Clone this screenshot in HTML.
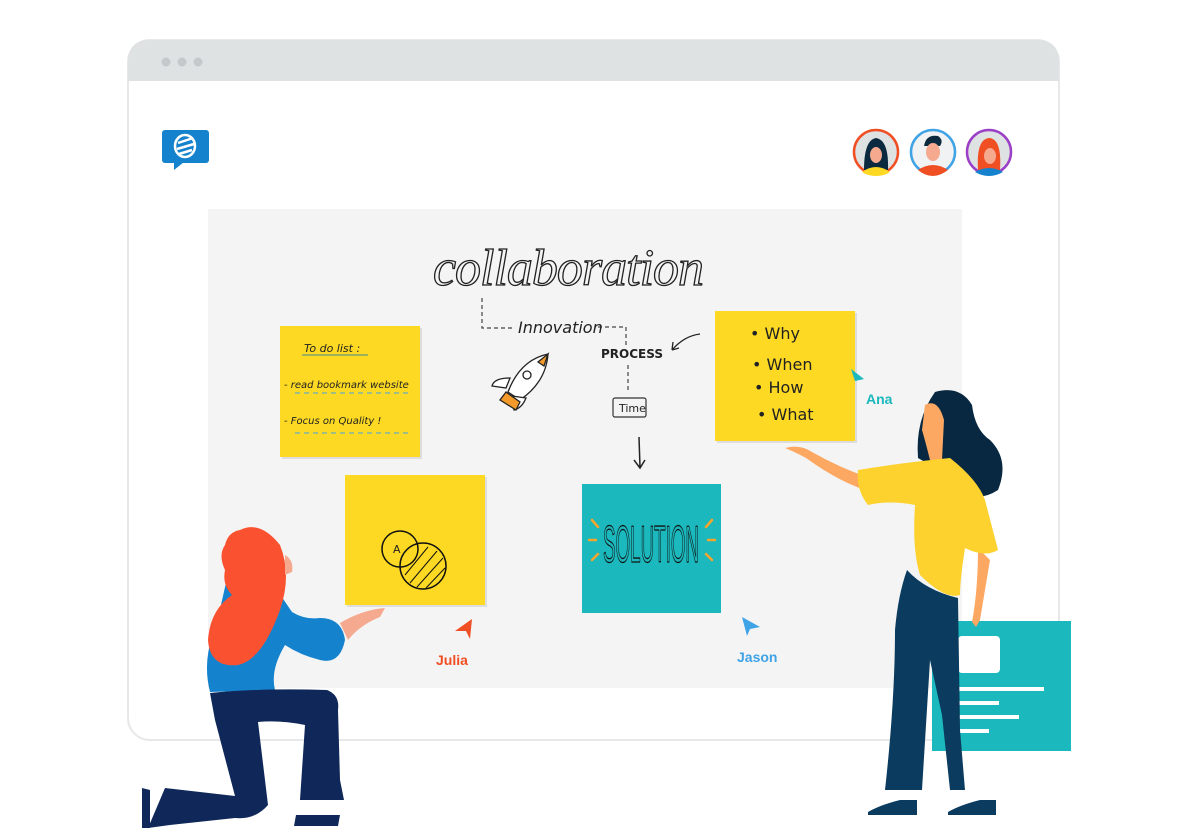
<!DOCTYPE html>
<html><head><meta charset="utf-8"><style>
html,body{margin:0;padding:0;background:#fff;}
svg{display:block}
.h{font-family:"DejaVu Sans","Liberation Sans",sans-serif;fill:#222}
</style></head><body>
<svg width="1200" height="840" viewBox="0 0 1200 840" xmlns="http://www.w3.org/2000/svg">
<rect x="128" y="40" width="931" height="700" rx="22" fill="#fff" stroke="#e6e8e9" stroke-width="2"/>
<path d="M128 81 V62 Q128 40 150 40 H1037 Q1059 40 1059 62 V81 Z" fill="#dfe2e3"/>
<circle cx="166" cy="62" r="4.5" fill="#c6c9cb"/><circle cx="182" cy="62" r="4.5" fill="#c6c9cb"/><circle cx="198" cy="62" r="4.5" fill="#c6c9cb"/>
<rect x="162" y="130" width="47" height="33" rx="3" fill="#1582cd"/>
<path d="M174 162 L174 170 L184 162 Z" fill="#1582cd"/>
<ellipse cx="185" cy="146" rx="10" ry="11" fill="none" stroke="#fff" stroke-width="2.5"/>
<path d="M178 143 L193 138 M177 149 L194 144 M179 154 L192 150" stroke="#fff" stroke-width="2.5"/>
<g>
<circle cx="876" cy="152" r="22" fill="#dfe2e3" stroke="#f04e23" stroke-width="2.5"/>
<path d="M864 170 Q864 140 876 138 Q889 140 888 170 Z" fill="#0c2a3f"/>
<ellipse cx="876" cy="155" rx="6" ry="8" fill="#f5a98e"/>
<path d="M862 172 Q876 162 890 172 Q884 176 876 176 Q868 176 862 172Z" fill="#fdd923"/>
</g>
<g>
<circle cx="933" cy="152" r="22" fill="#f1f2f3" stroke="#3fa3e6" stroke-width="2.5"/>
<path d="M924 146 Q926 134 938 136 Q944 140 940 146 Z" fill="#0c2a3f"/>
<ellipse cx="933" cy="152" rx="7" ry="9" fill="#f5a98e"/>
<path d="M918 170 Q933 160 948 170 Q940 176 933 176 Q925 176 918 170Z" fill="#f04e23"/>
</g>
<g>
<circle cx="989" cy="152" r="22" fill="#dfe2e3" stroke="#9b3fc7" stroke-width="2.5"/>
<path d="M978 170 Q976 138 990 138 Q1002 140 1000 170 Z" fill="#f04e23"/>
<ellipse cx="990" cy="156" rx="6" ry="8" fill="#f5a98e"/>
<path d="M975 172 Q989 164 1003 172 Q996 176 989 176 Q982 176 975 172Z" fill="#1582cd"/>
</g>
<rect x="208" y="209" width="754" height="479" fill="#f4f4f4"/>
<text x="568" y="285" text-anchor="middle" font-family="Liberation Serif,serif" font-style="italic" font-size="52" fill="none" stroke="#222" stroke-width="1.3" letter-spacing="-1">collaboration</text>
<path d="M482 298 V328 H512 M598 327 H626 V345 M628 365 V392" fill="none" stroke="#444" stroke-width="1.2" stroke-dasharray="4 3"/>
<text x="518" y="333" class="h" font-size="16" font-style="italic">Innovation</text>
<text x="601" y="358" class="h" font-size="12" font-weight="bold">PROCESS</text>
<path d="M700 334 Q684 336 672 350 M672 350 L673 342 M672 350 L679 348" fill="none" stroke="#222" stroke-width="1.3"/>
<rect x="613" y="398" width="33" height="19" rx="2" fill="none" stroke="#333" stroke-width="1.2"/>
<text x="619" y="412" class="h" font-size="11">Time</text>
<path d="M639 437 L640 467 M634 460 L640 468 L645 460" fill="none" stroke="#222" stroke-width="1.5"/>
<g stroke="#222" stroke-width="1.3">
<path d="M548 354 Q520 360 508 392 L520 400 Q546 382 548 354Z" fill="#fff"/>
<path d="M548 354 L538 362 L544 366 Z" fill="#f39a2b"/>
<path d="M510 378 Q494 378 492 386 L506 388Z" fill="#fff"/>
<path d="M526 398 Q522 408 514 410 L512 396Z" fill="#fff"/>
<path d="M506 392 L500 400 L516 410 L520 402Z" fill="#f39a2b"/>
<circle cx="527" cy="375" r="4" fill="#fff"/>
</g>
<rect x="282" y="328" width="140" height="131" fill="#ddd"/>
<rect x="280" y="326" width="140" height="131" fill="#fdd923"/>
<g class="h" font-style="italic">
<text x="304" y="352" font-size="11">To do list :</text>
<text x="284" y="388" font-size="10">- read bookmark website</text>
<text x="284" y="424" font-size="10">- Focus on Quality !</text>
<text x="352" y="510" font-size="10">- plan for location</text>
</g>
<path d="M302 355 H368" stroke="#3a8c8c" stroke-width="1"/>
<path d="M295 393 H410 M295 433 H408 M353 517 H468" stroke="#3fa3e6" stroke-dasharray="5 4"/>
<rect x="347" y="477" width="140" height="130" fill="#ddd"/>
<rect x="345" y="475" width="140" height="130" fill="#fdd923"/>
<circle cx="400" cy="549" r="18" fill="none" stroke="#111" stroke-width="1.5"/>
<circle cx="423" cy="566" r="23" fill="none" stroke="#111" stroke-width="1.5"/>
<text x="393" y="553" class="h" font-size="11">A</text>
<g stroke="#111" stroke-width="1"><path d="M405 575 L428 547 M410 583 L437 551 M417 587 L443 558 M426 588 L445 568"/></g>
<rect x="717" y="313" width="140" height="130" fill="#ddd"/>
<rect x="715" y="311" width="140" height="130" fill="#fdd923"/>
<g class="h" font-size="16">
<text x="750" y="339">•  Why</text><text x="752" y="370">• When</text><text x="754" y="393">• How</text><text x="757" y="420">• What</text>
</g>
<rect x="582" y="484" width="139" height="129" fill="#1bb8bd"/>
<text x="603" y="562" font-family="Liberation Sans,sans-serif" font-size="52" fill="none" stroke="#111" stroke-width="1.3" textLength="96" lengthAdjust="spacingAndGlyphs">SOLUTION</text>
<g stroke="#f4a52c" stroke-width="2.5" stroke-linecap="round"><path d="M592 520 L598 527 M589 540 L596 540 M592 560 L598 554 M712 520 L706 527 M715 540 L708 540 M712 560 L706 554"/></g>
<path d="M851 369 L864 379 L855 381 Z" fill="#1bb8bd"/>
<text x="866" y="404" font-family="Liberation Sans,sans-serif" font-weight="bold" font-size="14" fill="#1bb8bd">Ana</text>
<path d="M472 619 L455 631 L466 631 L470 639 Z" fill="#f04e23"/>
<text x="436" y="665" font-family="Liberation Sans,sans-serif" font-weight="bold" font-size="14" fill="#f04e23">Julia</text>
<path d="M742 617 L760 627 L750 629 L747 636 Z" fill="#3fa3e6"/>
<text x="737" y="662" font-family="Liberation Sans,sans-serif" font-weight="bold" font-size="14" fill="#3fa3e6">Jason</text>
<rect x="932" y="621" width="139" height="130" fill="#1bb8bd"/>
<rect x="958" y="636" width="42" height="37" rx="4" fill="#fff"/>
<g fill="#fff"><rect x="945" y="687" width="99" height="4"/><rect x="945" y="701" width="54" height="4"/><rect x="945" y="715" width="74" height="4"/><rect x="945" y="729" width="44" height="4"/></g>
<path d="M785 448 Q800 444 812 452 Q840 468 870 478 L872 492 Q842 484 806 458 Q795 452 785 448Z" fill="#fca863"/>
<path d="M978 548 L990 560 Q985 590 980 620 L976 627 L972 622 Q978 590 978 548Z" fill="#fca863"/>
<path d="M935 392 Q960 385 972 405 Q975 430 990 440 Q1010 460 998 490 Q975 505 958 485 Q940 470 918 458 Q915 420 935 392Z" fill="#072840"/>
<path d="M925 405 Q938 398 944 420 L942 460 L930 460 Q925 440 922 430Z" fill="#fca863"/>
<path d="M858 470 Q900 463 950 458 Q978 480 985 500 L998 550 Q985 558 965 548 Q960 580 960 595 Q945 600 920 575 Q912 550 915 505 Q890 500 868 505 Q856 490 858 470Z" fill="#fdd22e"/>
<path d="M907 570 Q925 590 958 598 L960 730 L965 790 L950 790 L942 715 L930 660 L922 790 L885 790 Q895 700 895 630 Q898 595 907 570Z" fill="#0b3b5e"/>
<path d="M868 812 Q880 805 900 800 L917 800 L917 815 H868Z M948 812 Q960 805 980 800 L996 800 L996 815 H948Z" fill="#0b3b5e"/>
<path d="M340 623 Q362 610 385 608 L380 617 Q360 625 348 640Z" fill="#f5a98e"/>
<path d="M232 556 Q250 552 262 568 L292 612 Q305 620 320 618 Q342 618 345 640 Q340 665 320 660 Q300 655 285 645 Q270 670 275 690 L210 692 Q202 660 215 630 Q220 610 232 556Z" fill="#1582cd"/>
<path d="M240 530 Q260 520 280 545 Q292 575 280 610 Q262 660 238 665 Q210 668 208 640 Q210 610 232 595 Q222 585 225 570 Q218 555 225 545 Q228 532 240 530Z" fill="#fa5230"/>
<path d="M285 555 Q294 560 292 572 L285 575Z" fill="#f5a98e"/>
<path d="M210 693 Q260 688 327 690 Q340 695 338 710 L340 780 L344 800 L300 800 L305 725 Q280 720 258 722 L268 805 Q255 820 235 818 L170 825 L148 828 L165 788 Q200 792 235 796 L215 720Z" fill="#0f2859"/>
<path d="M142 788 L150 790 L150 828 L142 828Z M296 815 L340 815 L338 826 L294 826Z" fill="#0f2859"/>
</svg>
</body></html>
